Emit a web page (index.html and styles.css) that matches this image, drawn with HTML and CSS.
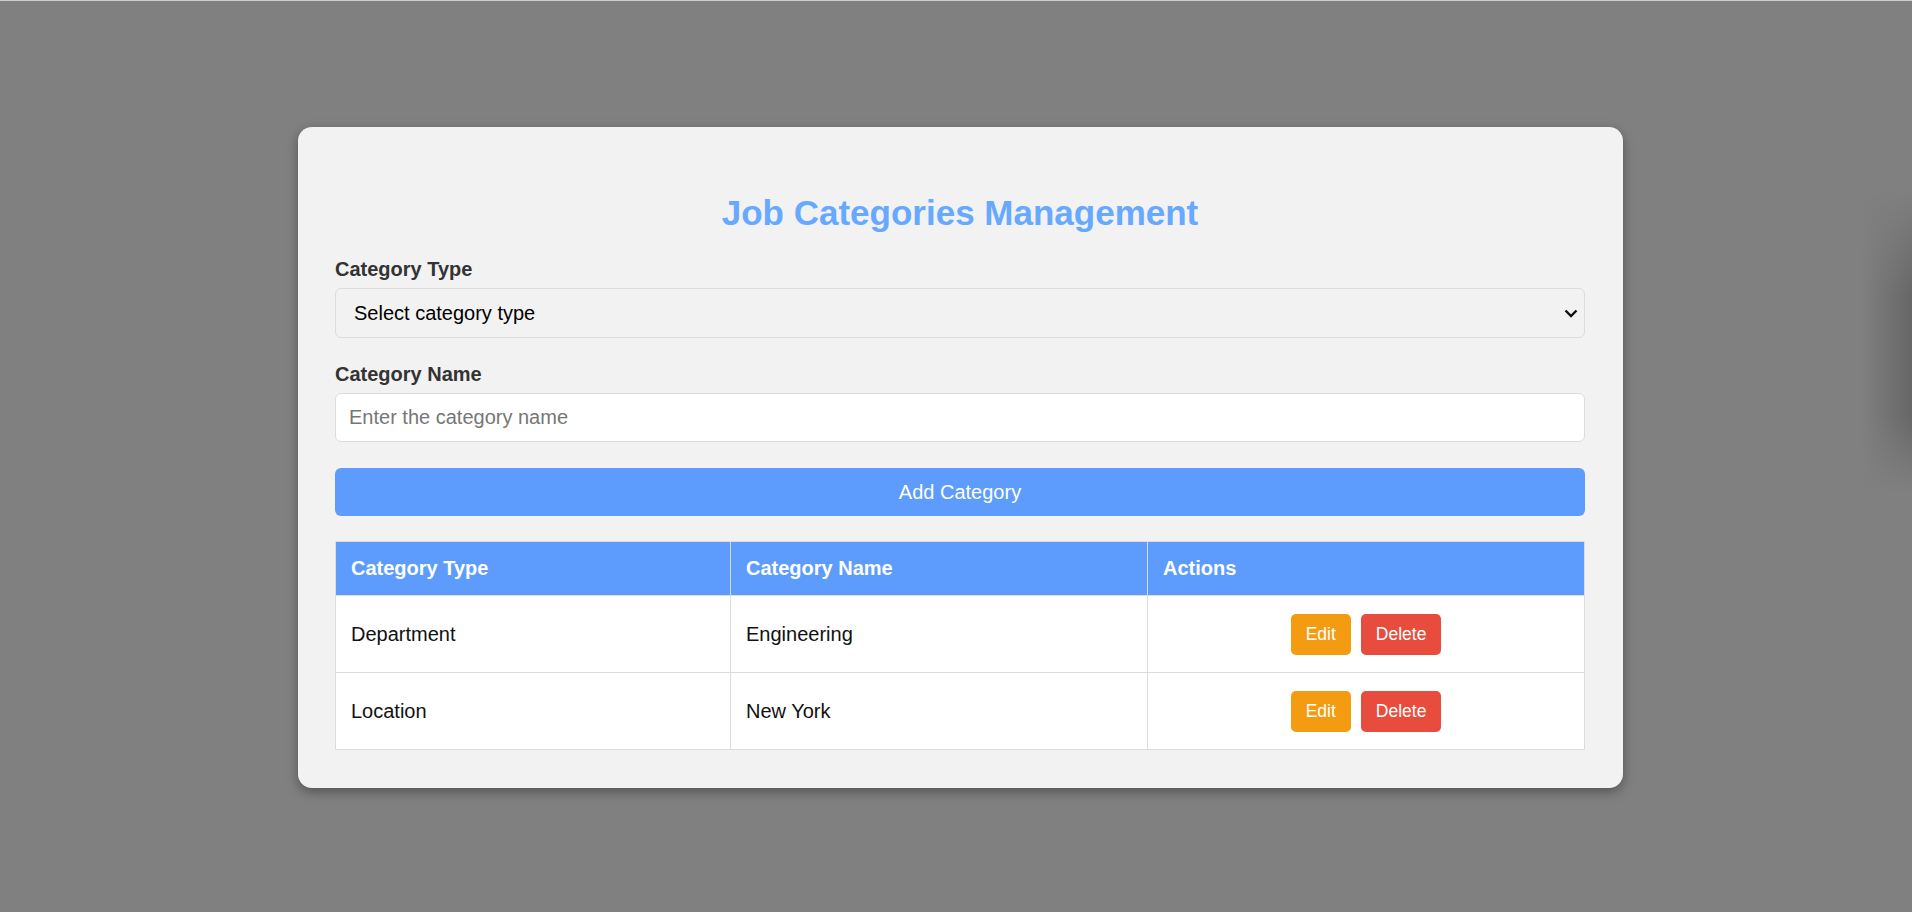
FILE: index.html
```html
<!DOCTYPE html>
<html lang="en">
<head>
<meta charset="utf-8">
<title>Job Categories Management</title>
<link rel="stylesheet" href="styles.css">
</head>
<body>
<div class="overlay">
  <div class="card">
    <h2 class="title">Job Categories Management</h2>
    <div class="field">
      <label class="label" for="ctype">Category Type</label>
      <div class="select-wrap">
        <select id="ctype" class="select">
          <option>Select category type</option>
          <option>Department</option>
          <option>Location</option>
        </select>
        <svg class="chevron" width="14" height="9" viewBox="0 0 14 9"><path d="M1.5 1.5 L7 7 L12.5 1.5" fill="none" stroke="#111" stroke-width="2.4"/></svg>
      </div>
    </div>
    <div class="field">
      <label class="label" for="cname">Category Name</label>
      <input id="cname" class="input" type="text" placeholder="Enter the category name">
    </div>
    <button class="add-btn">Add Category</button>
    <table class="table">
      <thead>
        <tr>
          <th class="col-type">Category Type</th>
          <th class="col-name">Category Name</th>
          <th class="col-actions">Actions</th>
        </tr>
      </thead>
      <tbody>
        <tr>
          <td>Department</td>
          <td>Engineering</td>
          <td class="actions"><button class="btn edit">Edit</button><button class="btn delete">Delete</button></td>
        </tr>
        <tr>
          <td>Location</td>
          <td>New York</td>
          <td class="actions"><button class="btn edit">Edit</button><button class="btn delete">Delete</button></td>
        </tr>
      </tbody>
    </table>
  </div>
</div>
<div class="side-shadow"></div>
</body>
</html>
```

FILE: styles.css
```css
html, body {
  margin: 0;
  padding: 0;
  height: 100%;
  overflow: hidden;
}
body {
  background: #808080;
  border-top: 1px solid #cfcfcf;
  box-sizing: border-box;
  font-family: "Liberation Sans", Arial, sans-serif;
  position: relative;
}
.overlay {
  height: 911px;
  box-sizing: border-box;
  padding-top: 2px;
  display: flex;
  align-items: center;
}
.card {
  margin-left: 298px;
  width: 1325px;
  box-sizing: border-box;
  padding: 38px 38px 38px 37px;
  background: #f2f2f2;
  border-radius: 14px;
  box-shadow: 0 4px 12px rgba(0, 0, 0, 0.35);
}
.title {
  margin: 28px 0 26px;
  text-align: center;
  color: #66a9ff;
  font-size: 35px;
  line-height: 39px;
  font-weight: bold;
}
.field {
  margin-bottom: 25px;
}
.label {
  display: block;
  font-size: 20px;
  line-height: 22px;
  font-weight: bold;
  color: #333;
  margin-bottom: 8px;
}
.select-wrap {
  position: relative;
}
.select {
  display: block;
  width: 100%;
  height: 50px;
  box-sizing: border-box;
  padding: 0 18px;
  font-family: inherit;
  font-size: 20px;
  color: #000;
  background: #f2f2f2;
  border: 1px solid #dcdcdc;
  border-radius: 6px;
  appearance: none;
  -webkit-appearance: none;
  outline: none;
}
.chevron {
  position: absolute;
  right: 7px;
  top: 21px;
  pointer-events: none;
}
.input {
  display: block;
  width: 100%;
  height: 49px;
  box-sizing: border-box;
  padding: 0 13px;
  font-family: inherit;
  font-size: 20px;
  background: #fff;
  border: 1px solid #dcdcdc;
  border-radius: 6px;
  outline: none;
}
.input::placeholder {
  color: #767676;
}
.add-btn {
  display: block;
  width: 100%;
  height: 48px;
  margin-top: 26px;
  border: none;
  border-radius: 6px;
  background: #5d9cfc;
  color: #fff;
  font-family: inherit;
  font-size: 20px;
}
.table {
  width: 100%;
  margin-top: 25px;
  border-collapse: collapse;
  table-layout: fixed;
  background: #fff;
  font-size: 20px;
}
.col-type { width: 364px; }
.col-name { width: 386px; }
.table th,
.table td {
  border: 1px solid #dcdcdc;
  text-align: left;
  padding: 15px;
}
.table th {
  background: #5d9cfc;
  color: #fff;
  font-weight: bold;
  line-height: 23px;
  padding: 15px 15px;
}
.table td {
  color: #111;
  padding: 17.5px 15px;
  line-height: 23px;
}
.table td.actions {
  text-align: center;
  font-size: 0;
}
.btn {
  border: none;
  border-radius: 5px;
  color: #fff;
  font-family: inherit;
  font-size: 17.5px;
  line-height: 21px;
  padding: 10px 15px;
  vertical-align: middle;
}
.btn + .btn {
  margin-left: 10px;
}
.edit {
  background: #f39c12;
}
.delete {
  background: #e74c3c;
}
.side-shadow {
  position: absolute;
  right: 0;
  top: 190px;
  width: 50px;
  height: 300px;
  background: linear-gradient(to right, rgba(0, 0, 0, 0), rgba(0, 0, 0, 0.2));
  -webkit-mask-image: linear-gradient(to bottom, transparent, #000 35%, #000 75%, transparent);
  mask-image: linear-gradient(to bottom, transparent, #000 35%, #000 75%, transparent);
  pointer-events: none;
}
```
